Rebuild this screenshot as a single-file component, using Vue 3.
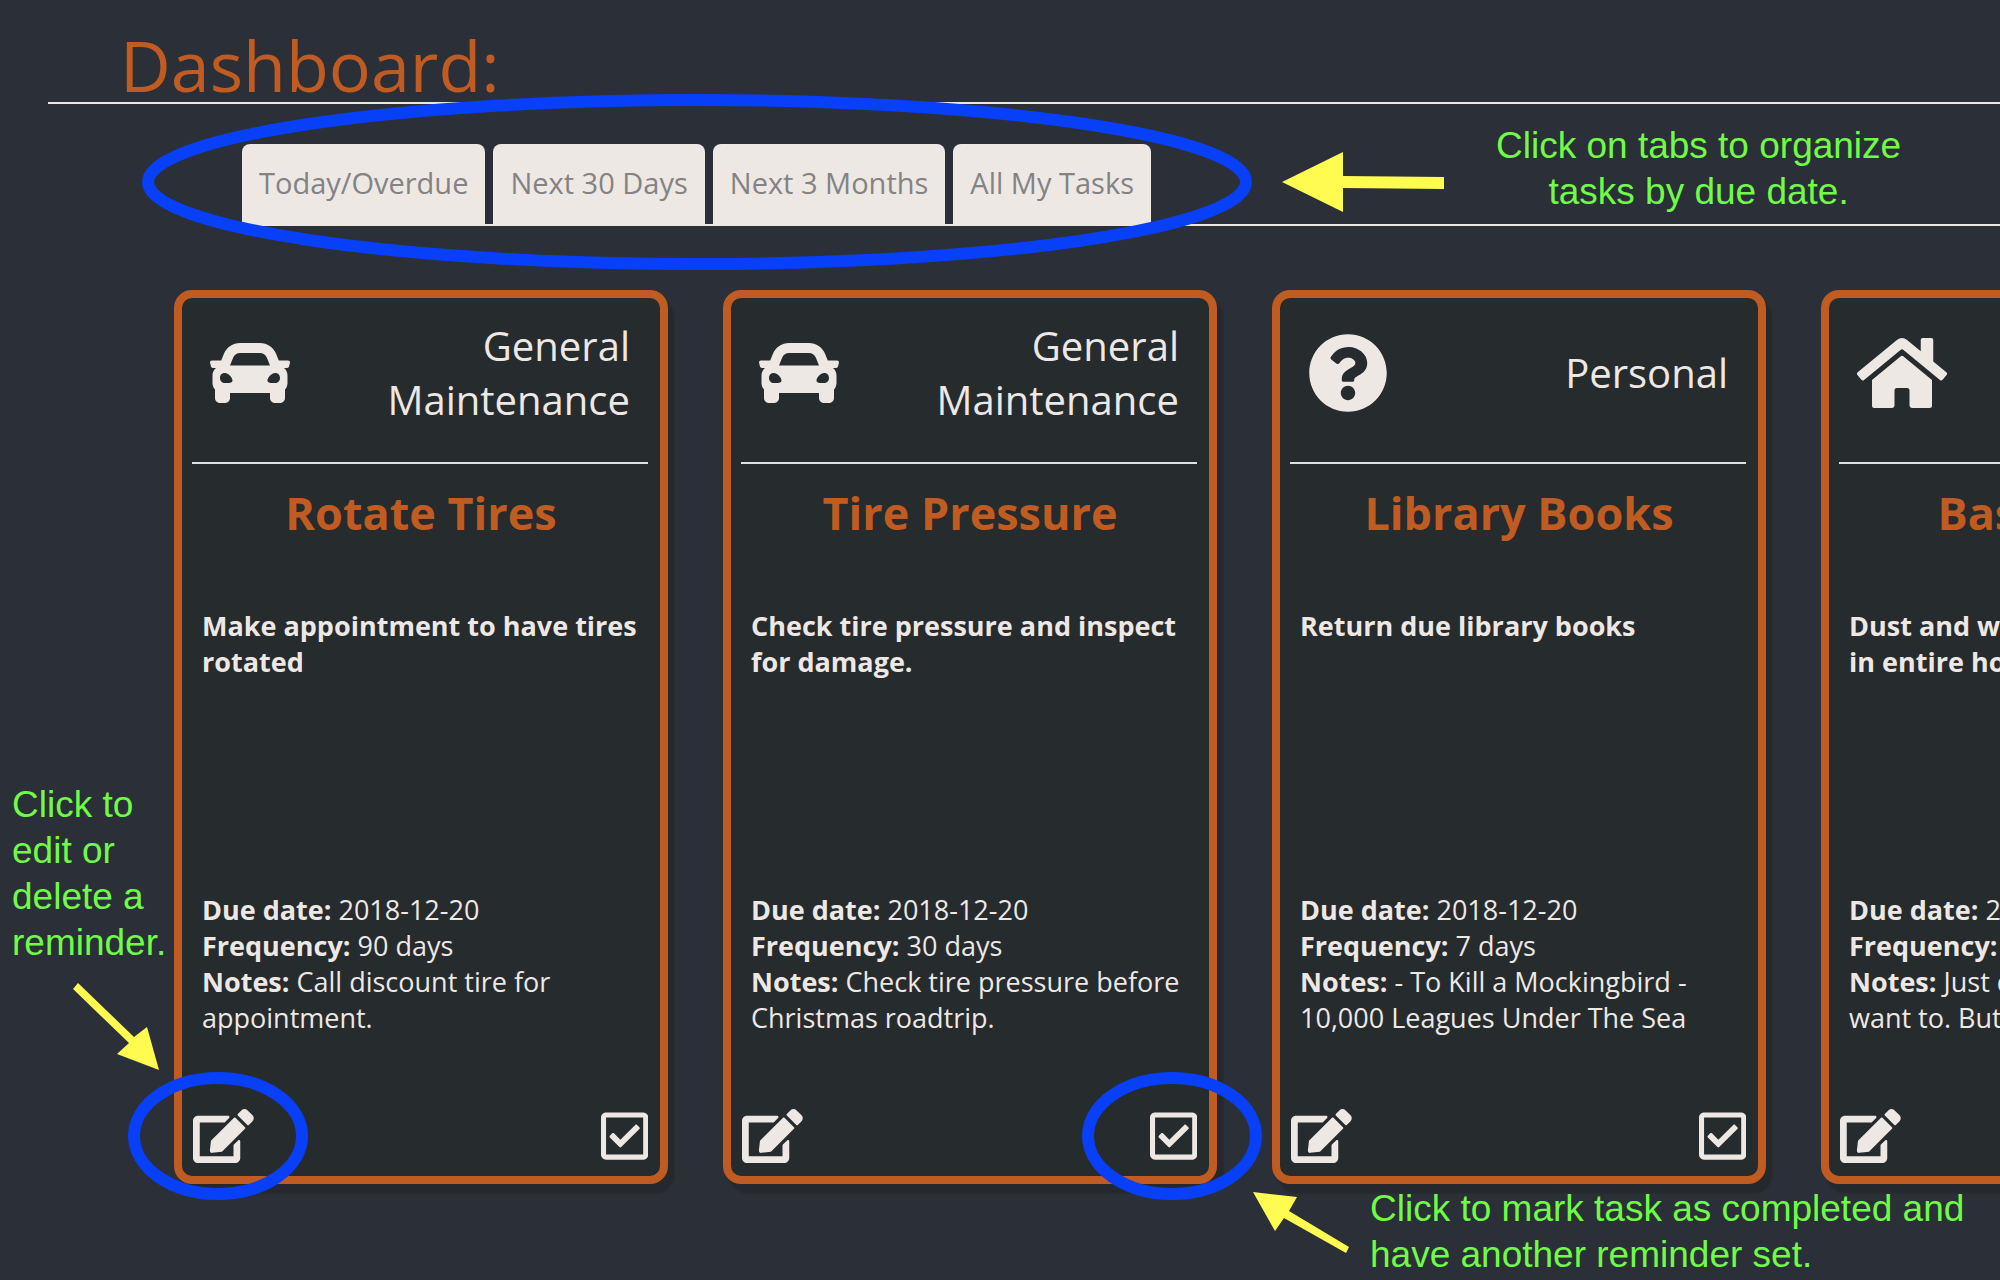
<script setup>
const tabs = ['Today/Overdue', 'Next 30 Days', 'Next 3 Months', 'All My Tasks']

const icons = {
  car: {
    box: '0 0 512 512',
    path: 'M499.99 176h-59.87l-16.64-41.6C406.38 91.63 365.57 64 319.5 64h-127c-46.06 0-86.88 27.63-103.99 70.4L71.87 176H12.01C4.2 176-1.53 183.34.37 190.91l6 24C7.7 220.25 12.5 224 18.01 224h20.07C24.65 235.73 16 252.78 16 272v48c0 16.12 6.16 30.67 16 41.93V416c0 17.67 14.33 32 32 32h32c17.67 0 32-14.33 32-32v-32h256v32c0 17.67 14.33 32 32 32h32c17.67 0 32-14.33 32-32v-54.07c9.84-11.25 16-25.8 16-41.93v-48c0-19.22-8.65-36.27-22.07-48H494c5.51 0 10.31-3.75 11.64-9.09l6-24c1.89-7.57-3.84-14.91-11.65-14.91zm-352.06-17.83c7.29-18.22 24.94-30.17 44.57-30.17h127c19.63 0 37.28 11.95 44.57 30.17L384 208H128l19.93-49.83zM96 319.8c-19.2 0-32-12.76-32-31.9S76.8 256 96 256s48 28.71 48 47.85-28.8 15.95-48 15.95zm320 0c-19.2 0-48 3.19-48-15.95S396.8 256 416 256s32 12.76 32 31.9-12.8 31.9-32 31.9z',
  },
  question: {
    box: '0 0 512 512',
    path: 'M504 256c0 136.997-111.043 248-248 248S8 392.997 8 256C8 119.083 119.043 8 256 8s248 111.083 248 248zM262.655 90c-54.497 0-89.255 22.957-116.549 63.758-3.536 5.286-2.353 12.415 2.715 16.258l34.699 26.31c5.205 3.947 12.621 3.008 16.665-2.122 17.864-22.658 30.113-35.797 57.303-35.797 20.429 0 45.698 13.148 45.698 32.958 0 14.976-12.363 22.667-32.534 33.976C247.128 238.528 216 254.941 216 296v4c0 6.627 5.373 12 12 12h56c6.627 0 12-5.373 12-12v-1.333c0-28.462 83.186-29.647 83.186-106.667 0-58.002-60.165-102-116.531-102zM256 338c-25.365 0-46 20.635-46 46 0 25.364 20.635 46 46 46s46-20.636 46-46c0-25.365-20.635-46-46-46z',
  },
  home: {
    box: '0 0 576 512',
    path: 'M280.37 148.26L96 300.11V464a16 16 0 0 0 16 16l112.06-.29a16 16 0 0 0 15.92-16V368a16 16 0 0 1 16-16h64a16 16 0 0 1 16 16v95.64a16 16 0 0 0 16 16.05L464 480a16 16 0 0 0 16-16V300L295.67 148.26a12.19 12.19 0 0 0-15.3 0zM571.6 251.47L488 182.56V44.05a12 12 0 0 0-12-12h-56a12 12 0 0 0-12 12v72.61L318.47 43a48 48 0 0 0-61 0L4.34 251.47a12 12 0 0 0-1.6 16.9l25.5 31A12 12 0 0 0 45.15 301l235.22-193.74a12.19 12.19 0 0 1 15.3 0L530.9 301a12 12 0 0 0 16.9-1.6l25.5-31a12 12 0 0 0-1.7-16.93z',
  },
}

const tasks = [
  {
    category: 'General Maintenance', icon: 'car', title: 'Rotate Tires',
    description: 'Make appointment to have tires rotated',
    due: '2018-12-20', frequency: '90 days', notes: 'Call discount tire for appointment.',
  },
  {
    category: 'General Maintenance', icon: 'car', title: 'Tire Pressure',
    description: 'Check tire pressure and inspect for damage.',
    due: '2018-12-20', frequency: '30 days', notes: 'Check tire pressure before Christmas roadtrip.',
  },
  {
    category: 'Personal', icon: 'question', title: 'Library Books',
    description: 'Return due library books',
    due: '2018-12-20', frequency: '7 days', notes: '- To Kill a Mockingbird - 10,000 Leagues Under The Sea',
  },
  {
    category: 'Home', icon: 'home', title: 'Baseboards',
    description: 'Dust and wipe down baseboards in entire house',
    due: '2018-12-20', frequency: '90 days', notes: 'Just do it even if you don\'t want to. But do it well.',
  },
]
</script>

<template>
  <main class="dashboard">
    <h1>Dashboard:</h1>

    <nav class="tabs">
      <button v-for="tab in tabs" :key="tab" type="button" class="tab">{{ tab }}</button>
    </nav>

    <section class="cards">
      <article v-for="task in tasks" :key="task.title" class="card">
        <header class="card-head">
          <svg class="category-icon" :viewBox="icons[task.icon].box" aria-hidden="true">
            <path :d="icons[task.icon].path" />
          </svg>
          <span class="category">{{ task.category }}</span>
        </header>
        <h2>{{ task.title }}</h2>
        <p class="description">{{ task.description }}</p>
        <div class="details">
          <p><b>Due date:</b> {{ task.due }}</p>
          <p><b>Frequency:</b> {{ task.frequency }}</p>
          <p><b>Notes:</b> {{ task.notes }}</p>
        </div>
        <footer class="actions">
          <button type="button" aria-label="Edit reminder">
            <svg viewBox="0 0 576 512" aria-hidden="true">
              <path d="M402.6 83.2l90.2 90.2c3.8 3.8 3.8 10 0 13.8L274.4 405.6l-92.8 10.3c-12.4 1.4-22.9-9.1-21.5-21.5l10.3-92.8L388.8 83.2c3.8-3.8 10-3.8 13.8 0zm162-22.9l-48.8-48.8c-15.2-15.2-39.9-15.2-55.2 0l-35.4 35.4c-3.8 3.8-3.8 10 0 13.8l90.2 90.2c3.8 3.8 10 3.8 13.8 0l35.4-35.4c15.2-15.3 15.2-40 0-55.2zM384 346.2V448H64V128h229.8c3.2 0 6.2-1.3 8.5-3.5l40-40c7.6-7.6 2.2-20.5-8.5-20.5H48C21.5 64 0 85.5 0 112v352c0 26.5 21.5 48 48 48h352c26.5 0 48-21.5 48-48V306.2c0-10.7-12.9-16-20.5-8.5l-40 40c-2.2 2.3-3.5 5.3-3.5 8.5z" />
            </svg>
          </button>
          <button type="button" aria-label="Mark task as completed">
            <svg viewBox="0 0 448 512" aria-hidden="true">
              <path d="M400 32H48C21.49 32 0 53.49 0 80v352c0 26.51 21.49 48 48 48h352c26.51 0 48-21.49 48-48V80c0-26.51-21.49-48-48-48zm0 400H48V80h352v352zm-35.864-241.724L191.547 361.48c-4.705 4.667-12.303 4.637-16.97-.068l-90.781-91.516c-4.667-4.705-4.637-12.303.069-16.971l22.719-22.536c4.705-4.667 12.303-4.637 16.97.069l59.792 60.277 141.352-140.216c4.705-4.667 12.303-4.637 16.97.068l22.536 22.718c4.667 4.706 4.637 12.304-.068 16.971z" />
            </svg>
          </button>
        </footer>
      </article>
    </section>

    <svg class="marks" aria-hidden="true">
      <g class="rings">
        <ellipse cx="697" cy="182" rx="549" ry="82" />
        <ellipse cx="218" cy="1136" rx="84" ry="58" />
        <ellipse cx="1172" cy="1136" rx="84" ry="58" />
      </g>
      <g class="arrows">
        <path d="M1282 182L1343 152V176L1444 177V189L1343 188V212Z" />
        <path d="M159 1070L117 1054L129 1043L73 989L78 983L134 1037L147 1027Z" />
        <path d="M1253 1192L1297 1197L1289 1211L1349 1247L1346 1253L1284 1218L1275 1231Z" />
      </g>
    </svg>
    <p class="note note-tabs">Click on tabs to organize<br>tasks by due date.</p>
    <p class="note note-edit">Click to<br>edit or<br>delete a<br>reminder.</p>
    <p class="note note-done">Click to mark task as completed and<br>have another reminder set.</p>
  </main>
</template>

<style>
body {
  background: #2b2f37;
}
</style>

<style scoped>
.dashboard {
  position: relative;
  overflow: hidden;
  min-height: 100vh;
  color: #eee8e5;
  font: 27px/36px "Open Sans", sans-serif;
}

h1 {
  margin: 0 0 0 48px;
  padding: 28px 0 0 72px;
  border-bottom: 2px solid #eee8e5;
  color: #c05b21;
  font-size: 70px;
  font-weight: 400;
  line-height: 74px;
}

.tabs {
  display: flex;
  gap: 8px;
  margin: 40px 0 0 242px;
  border-bottom: 2px solid #eee8e5;
}

.tab {
  height: 80px;
  padding: 0 17px 2px;
  border: 0;
  border-radius: 8px 8px 0 0;
  background: #eee8e5;
  color: #838383;
  font: inherit;
  font-size: 29px;
}

.cards {
  display: flex;
  gap: 55px;
  margin: 64px 0 0 174px;
}

.card {
  box-sizing: border-box;
  display: flex;
  flex: 0 0 494px;
  flex-direction: column;
  min-height: 894px;
  border: 8px solid #c05b21;
  border-radius: 18px;
  background: #262b2e;
  box-shadow: 6px 9px 2px #25282d;
}

.card-head {
  display: flex;
  align-items: center;
  justify-content: space-between;
  height: 132px;
  margin: 0 12px 0 10px;
  padding: 9px 18px 23px;
  border-bottom: 2px solid #dee2e6;
}

.category-icon {
  flex: none;
  height: 80px;
  fill: currentColor;
}

.category {
  max-width: 250px;
  font-size: 40px;
  line-height: 54px;
  text-align: right;
}

h2 {
  margin: 19px 0 0;
  color: #c05b21;
  font-size: 45px;
  line-height: 60px;
  text-align: center;
}

.description {
  height: 248px;
  margin: 65px 20px 0;
  font-weight: 700;
}

.details {
  margin: 36px 20px 0;
}

.details p {
  margin: 0;
}

.actions {
  display: flex;
  justify-content: space-between;
  margin: auto 12px 13px 11px;
}

.actions button {
  display: flex;
  padding: 0;
  border: 0;
  background: none;
  color: inherit;
}

.actions svg {
  height: 54px;
  fill: currentColor;
}

.marks {
  position: absolute;
  top: 0;
  left: 0;
  width: 100%;
  height: 100%;
  pointer-events: none;
}

.rings {
  fill: none;
  stroke: #0740f8;
  stroke-width: 12px;
}

.arrows {
  fill: #fffb50;
}

.note {
  position: absolute;
  margin: 0;
  color: #6ffb46;
  font: 37px/46px "Liberation Sans", Arial, sans-serif;
  white-space: nowrap;
}

.note-tabs {
  top: 123px;
  left: 1496px;
  text-align: center;
}

.note-edit {
  top: 782px;
  left: 12px;
}

.note-done {
  top: 1186px;
  left: 1370px;
}
</style>
